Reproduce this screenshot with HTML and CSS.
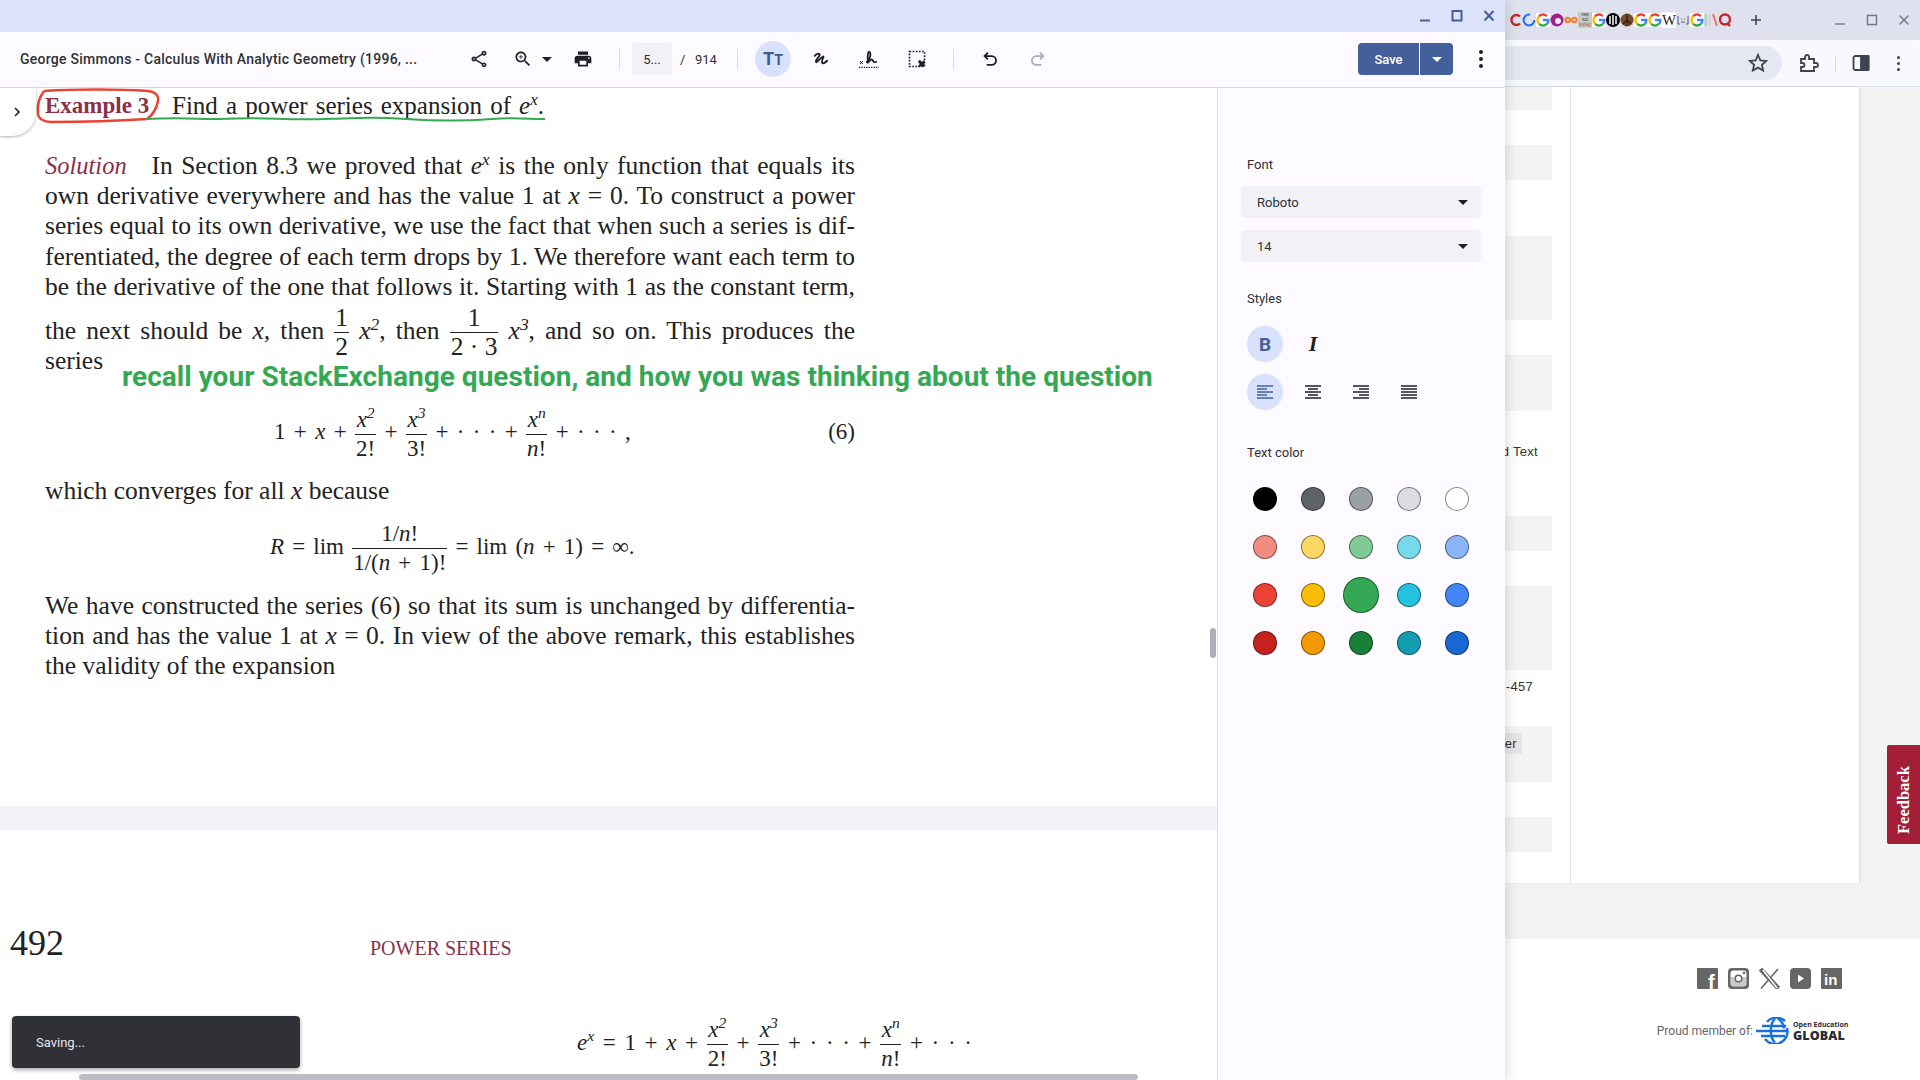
FILE: index.html
```html
<!DOCTYPE html>
<html lang="en">
<head>
    <meta charset="UTF-8">
    <title>George Simmons - Calculus With Analytic Geometry</title>
    <link rel="stylesheet" href="styles.css">
</head>
<body>
    <svg class="defs" width="0" height="0">
        <symbol id="fav-g" viewBox="1 0 14 16">
            <rect x="1" y="1" width="14" height="14" fill="#fff"/>
            <g fill="none" stroke-width="2.4">
                <path d="M8 8h5.4a5.5 5.5 0 0 1-1.5 3.9" stroke="#4285f4"/>
                <path d="M11.9 11.9a5.5 5.5 0 0 1-7.8 0" stroke="#34a853"/>
                <path d="M4.1 11.9a5.5 5.5 0 0 1 0-7.8" stroke="#fbbc05"/>
                <path d="M4.1 4.1a5.5 5.5 0 0 1 7.8 0" stroke="#ea4335"/>
            </g>
        </symbol>
        <symbol id="align-left" viewBox="0 0 16 14"><path d="M0 1h16M0 4h10M0 7h16M0 10h10M0 13h16"/></symbol>
        <symbol id="align-center" viewBox="0 0 16 14"><path d="M0 1h16M3 4h10M0 7h16M3 10h10M0 13h16"/></symbol>
        <symbol id="align-right" viewBox="0 0 16 14"><path d="M0 1h16M6 4h10M0 7h16M6 10h10M0 13h16"/></symbol>
        <symbol id="align-full" viewBox="0 0 16 14"><path d="M0 1h16M0 4h16M0 7h16M0 10h16M0 13h16"/></symbol>
    </svg>

    <!-- browser window behind the pdf app -->
    <div class="browser">
        <div class="tabstrip">
            <div class="favs">
                <svg class="fav" viewBox="0 0 14 16"><path d="M12 4.500a5 5 0 1 0 0 7" fill="none" stroke="#c62828" stroke-width="2.4"/></svg>
                <svg class="fav" viewBox="0 0 14 16"><circle cx="7" cy="8" r="5.4" fill="none" stroke="#1a73e8" stroke-width="2" stroke-dasharray="26 8"/></svg>
                <svg class="fav"><use href="#fav-g"/></svg>
                <svg class="fav" viewBox="0 0 14 16"><circle cx="7" cy="8" r="6.5" fill="#a01f8f"/><circle cx="8" cy="9" r="3" fill="#f4e9f4"/></svg>
                <svg class="fav" viewBox="0 0 14 16"><path d="M7 8C5 5 1.500 5 1.500 8s3.500 3 5.500 0 5.500-3 5.500 0-3.500 3-5.500 0z" fill="none" stroke="#f57c28" stroke-width="2"/></svg>
                <span class="fav fav-res">res<br>sci<br><b>today</b></span>
                <svg class="fav"><use href="#fav-g"/></svg>
                <svg class="fav" viewBox="0 0 14 16"><circle cx="7" cy="8" r="7" fill="#000"/><path d="M4 4v8M7 3v10M10 4v8" stroke="#fff" stroke-width="1.500"/></svg>
                <svg class="fav" viewBox="0 0 14 16"><circle cx="7" cy="8" r="6.5" fill="#7a4a28"/><path d="M7 2v12M7 8l-4 4M7 8l4 4" stroke="#222" stroke-width="1.200"/></svg>
                <svg class="fav"><use href="#fav-g"/></svg>
                <svg class="fav"><use href="#fav-g"/></svg>
                <span class="fav fav-w">W</span>
                <svg class="fav" viewBox="0 0 14 16"><path d="M2 4v8h2M12 4v8h-2M5 7h1M8 7h1M5 10h4" fill="none" stroke="#4a5a80"/></svg>
                <svg class="fav"><use href="#fav-g"/></svg>
                <svg class="fav" viewBox="0 0 14 16"><path d="M2 2v12" stroke="#a8d8c8" stroke-width="3"/><path d="M6 2v12" stroke="#e0c8c8" stroke-width="2"/><path d="M9 2l4 12" stroke="#e57368" stroke-width="2"/></svg>
                <svg class="fav" viewBox="0 0 14 16"><circle cx="7" cy="7.500" r="5" fill="none" stroke="#c62828" stroke-width="2.400"/><path d="M9 11l3 3" stroke="#c62828" stroke-width="2.400"/></svg>
            </div>
            <svg class="new-tab" viewBox="0 0 12 12"><path d="M6 1v10M1 6h10"/></svg>
            <div class="win-controls">
                <svg viewBox="0 0 12 12"><path d="M1 10h10"/></svg>
                <svg viewBox="0 0 12 12"><rect x="1.500" y="1.500" width="9" height="9"/></svg>
                <svg viewBox="0 0 12 12"><path d="M1.500 1.500l9 9M10.500 1.500l-9 9"/></svg>
            </div>
        </div>
        <div class="chrome-bar">
            <div class="omnibox">
                <svg class="chrome-icon" viewBox="0 0 24 24"><path d="M12 4l2.400 5.300 5.800.6-4.300 3.900 1.200 5.700L12 16.600l-5.100 2.900 1.200-5.700-4.300-3.900 5.800-.6z"/></svg>
            </div>
            <svg class="chrome-icon ext-icon" viewBox="0 0 24 24"><path d="M5 8h4V6a2 2 0 0 1 4 0v2h5v4h2a2 2 0 0 1 0 4h-2v4H5v-4h1.500a2 2 0 0 0 0-4H5z"/></svg>
            <span class="chrome-sep"></span>
            <svg class="chrome-icon panel-icon" viewBox="0 0 24 24"><rect x="4.500" y="5" width="15" height="14" rx="2"/><rect x="12" y="5" width="7.500" height="14" class="panel-fill"/></svg>
            <span class="chrome-kebab"><i></i><i></i><i></i></span>
        </div>
        <div class="site-main">
            <div class="site-sheet">
                <div class="form-col">
                    <div class="bar bar-a"></div>
                    <div class="bar bar-b"></div>
                    <div class="bar bar-c"></div>
                    <div class="bar bar-d"></div>
                    <div class="form-text text-a">d Text</div>
                    <div class="bar bar-e"></div>
                    <div class="bar bar-f"></div>
                    <div class="form-text text-b">-457</div>
                    <div class="bar bar-g"><span class="chip">er</span></div>
                    <div class="bar bar-h"></div>
                </div>
                <div class="preview-col"></div>
            </div>
            <div class="feedback">Feedback</div>
        </div>
        <footer class="site-footer">
            <div class="socials">
                <svg viewBox="0 0 21 21"><rect width="21" height="21" rx="1" fill="#666"/><text x="11" y="21" class="social-f">f</text></svg>
                <svg viewBox="0 0 21 21"><rect width="21" height="21" rx="4" fill="#666"/><rect x="2.500" y="2.500" width="16" height="16" rx="3" fill="#fff"/><rect x="2.500" y="9" width="16" height="9.500" fill="#666" opacity=".35"/><circle cx="10.500" cy="10.500" r="4" fill="#666"/><circle cx="10.500" cy="10.500" r="2.500" fill="#fff"/><circle cx="16" cy="5" r="1.300" fill="#666"/></svg>
                <svg viewBox="0 0 21 21"><path d="M1.500 1l18 19.500" stroke="#666" stroke-width="4.500" fill="none"/><path d="M19 1L2 20.500" stroke="#666" stroke-width="1.600" fill="none"/><path d="M3.800 2l14.400 18" stroke="#fff" stroke-width="1.500" fill="none"/></svg>
                <svg viewBox="0 0 21 21"><rect width="21" height="21" rx="4" fill="#666"/><path d="M8 6.500l6 4-6 4z" fill="#fff"/></svg>
                <svg viewBox="0 0 21 21"><rect width="21" height="21" rx="1" fill="#666"/><text x="3" y="17" class="social-in">in</text></svg>
            </div>
            <div class="member">
                <span class="member-label">Proud member of:</span>
                <svg class="oeg-globe" viewBox="0 0 34 27">
                    <g fill="none" stroke="#1a6fe0" stroke-width="2.400">
                        <path d="M11 5a12.500 12.500 0 0 1 18-1M31 11a12.500 12.500 0 0 1-22 11"/>
                        <path d="M19 1.500c-5 5-6 18 0 24M22 1.500c5 4 6 8 6 10"/>
                        <path d="M6 9h24M0 14h32M5 19h24"/>
                    </g>
                </svg>
                <div class="oeg-name"><span class="oeg-top">Open Education</span><span class="oeg-bottom">GLOBAL</span></div>
            </div>
        </footer>
    </div>

    <!-- pdf app window -->
    <div class="app">
        <div class="app-title">
            <svg viewBox="0 0 12 12"><path d="M1 10.500h10"/></svg>
            <svg viewBox="0 0 12 12"><rect x="1.500" y="1" width="9" height="9.500"/></svg>
            <svg viewBox="0 0 12 12"><path d="M1.500 1l9 9.500M10.500 1l-9 9.500"/></svg>
        </div>
        <div class="toolbar">
            <div class="doc-name">George Simmons - Calculus With Analytic Geometry (1996, ...</div>
            <button class="tb-btn"><svg viewBox="0 0 24 24"><path d="M18 16.080c-.76 0-1.440.3-1.960.77L8.910 12.700c.05-.23.09-.46.09-.7s-.04-.47-.09-.7l7.050-4.110c.54.5 1.250.81 2.040.81 1.660 0 3-1.340 3-3s-1.340-3-3-3-3 1.340-3 3c0 .24.04.47.09.7L8.040 9.810C7.500 9.310 6.790 9 6 9c-1.660 0-3 1.340-3 3s1.340 3 3 3c.79 0 1.500-.31 2.040-.81l7.120 4.160c-.05.21-.08.43-.08.65 0 1.610 1.310 2.920 2.920 2.920s2.920-1.310 2.920-2.920-1.310-2.920-2.920-2.920zM18 4c.55 0 1 .45 1 1s-.45 1-1 1-1-.45-1-1 .45-1 1-1zM6 13c-.55 0-1-.45-1-1s.45-1 1-1 1 .45 1 1-.45 1-1 1zm12 7.020c-.55 0-1-.45-1-1s.45-1 1-1 1 .45 1 1-.45 1-1 1z"/></svg></button>
            <button class="tb-btn zoom-btn"><svg viewBox="0 0 24 24"><path d="M15.500 14h-.79l-.28-.27C15.410 12.590 16 11.110 16 9.500 16 5.910 13.090 3 9.500 3S3 5.910 3 9.500 5.910 16 9.500 16c1.610 0 3.090-.59 4.230-1.570l.27.28v.79l5 4.990L20.490 19l-4.990-5zm-6 0C7.010 14 5 11.990 5 9.500S7.010 5 9.500 5 14 7.010 14 9.500 11.990 14 9.500 14zM12 10h-2v2H9v-2H7V9h2V7h1v2h2v1z"/></svg></button>
            <span class="caret zoom-caret"></span>
            <button class="tb-btn print-btn"><svg viewBox="0 0 24 24"><path d="M19 8H5c-1.660 0-3 1.340-3 3v6h4v4h12v-4h4v-6c0-1.660-1.340-3-3-3zm-3 11H8v-5h8v5zm3-7c-.55 0-1-.45-1-1s.45-1 1-1 1 .45 1 1-.45 1-1 1zm-1-9H6v4h12V3z"/></svg></button>
            <span class="tb-sep sep-page"></span>
            <div class="page-input">5...</div>
            <span class="page-slash">/</span>
            <span class="page-count">914</span>
            <span class="tb-sep sep-tools"></span>
            <button class="tb-btn text-tool"><span class="tt-big">T</span><span class="tt-small">T</span></button>
            <button class="tb-btn tool-btn"><svg viewBox="0 0 24 24" class="stroke-icon"><path d="M4 9c2-3 6.500-4.500 6.500-2S5 12 6 15.500c1 2 5-5 8.500-6.500 2-.5-3.500 6.500-.5 8 2 .5 4.500-2 6-3.500"/></svg></button>
            <button class="tb-btn tool-btn"><svg viewBox="0 0 24 24" class="stroke-icon sign-icon"><path class="sign-x" d="M1 14.500l3.500 3.500M4.500 14.500L1 18"/><path d="M8.500 16c3.500-1 6.500-9 4.500-12s-3.500 5-2 12c3-3 4.500-4.500 5.500-2.500s1.500 3 5 1.500"/><path class="sign-dots" d="M0 22h24"/></svg></button>
            <button class="tb-btn tool-btn"><svg viewBox="0 0 24 24"><rect x="3" y="3" width="18" height="18" fill="none" stroke="#1f2024" stroke-width="2" stroke-dasharray="2 1.750"/><path d="M21 21h-8.500l3-3-2.500-2.500 2.500-2.500 2.500 2.500 3-3z"/></svg></button>
            <span class="tb-sep sep-history"></span>
            <button class="tb-btn undo-btn"><svg viewBox="0 0 24 24" class="stroke-icon"><path d="M9.500 4.500L5.500 8.500l4 4M5.500 8.500h8.500a5.200 5.200 0 0 1 0 10.500H8"/></svg></button>
            <button class="tb-btn tool-btn redo-btn"><svg viewBox="0 0 24 24" class="stroke-icon"><path d="M14.500 4.500l4 4-4 4M18.500 8.500H10a5.200 5.200 0 0 0 0 10.500h6"/></svg></button>
            <div class="save-group">
                <span class="save-label">Save</span>
                <span class="save-arrow"><span class="caret caret-white"></span></span>
            </div>
            <div class="app-kebab"><i></i><i></i><i></i></div>
        </div>

        <div class="app-body">
            <div class="pdf-view">
                <div class="pdf-page page-one">
                    <div class="line example-line"><b class="example-tag">Example 3</b><span class="example-text">Find a power series expansion of <i>e</i><sup>x</sup>.</span></div>
                    <div class="line solution-line"><i class="solution-tag">Solution</i> In Section 8.3 we proved that <i>e</i><sup>x</sup> is the only function that equals its</div>
                    <div class="line">own derivative everywhere and has the value 1 at <i>x</i> = 0. To construct a power</div>
                    <div class="line">series equal to its own derivative, we use the fact that when such a series is dif-</div>
                    <div class="line">ferentiated, the degree of each term drops by 1. We therefore want each term to</div>
                    <div class="line">be the derivative of the one that follows it. Starting with 1 as the constant term,</div>
                    <div class="line next-line">the next should be <i>x,</i> then <span class="frac"><span>1</span><span class="den">2</span></span> <i>x</i><sup>2</sup>, then <span class="frac"><span>1</span><span class="den">2 · 3</span></span> <i>x</i><sup>3</sup>, and so on. This produces the</div>
                    <div class="line last-line">series</div>

                    <div class="display display-six">
                        <span class="math">1 + <i>x</i> + <span class="frac"><span><i>x</i><sup>2</sup></span><span class="den">2!</span></span> + <span class="frac"><span><i>x</i><sup>3</sup></span><span class="den">3!</span></span> + · · · + <span class="frac"><span><i>x</i><sup>n</sup></span><span class="den"><i>n</i>!</span></span> + · · · ,</span>
                        <span class="math">(6)</span>
                    </div>
                    <div class="line last-line which-line">which converges for all <i>x</i> because</div>
                    <div class="display display-r">
                        <span class="math"><i>R</i> = lim <span class="frac"><span>1/<i>n</i>!</span><span class="den">1/(<i>n</i> + 1)!</span></span> = lim (<i>n</i> + 1) = ∞.</span>
                    </div>
                    <div class="line we-line">We have constructed the series (6) so that its sum is unchanged by differentia-</div>
                    <div class="line">tion and has the value 1 at <i>x</i> = 0. In view of the above remark, this establishes</div>
                    <div class="line last-line">the validity of the expansion</div>

                    <svg class="marks" width="1218" height="718" viewBox="0 0 1218 718">
                        <path class="mark-red" d="M44 3c30-2 75-2 104 0 8 1 11 5 10 10-1 7-6 15-11 18-30 2-65 3-96 3-7 0-13-3-13-9-1-7 1-15 6-22"/>
                        <path class="mark-green" d="M146 31c40-2 60 1 90-.5s50 2 90 .5 50-2 80 0 60 2 86 0 40 .5 53 0"/>
                    </svg>
                    <div class="note">recall your StackExchange question, and how you was thinking about the question</div>
                </div>
                <div class="page-gap"></div>
                <div class="pdf-page page-two">
                    <div class="running-head"><span class="folio">492</span><span class="chapter">POWER SERIES</span></div>
                    <div class="display display-exp">
                        <span class="math"><i>e</i><sup>x</sup> = 1 + <i>x</i> + <span class="frac"><span><i>x</i><sup>2</sup></span><span class="den">2!</span></span> + <span class="frac"><span><i>x</i><sup>3</sup></span><span class="den">3!</span></span> + · · · + <span class="frac"><span><i>x</i><sup>n</sup></span><span class="den"><i>n</i>!</span></span> + · · ·</span>
                    </div>
                </div>
                <button class="panel-toggle"><svg viewBox="0 0 12 12"><path d="M4 2l4 4-4 4"/></svg></button>
                <div class="resize-grip"></div>
                <div class="scroll-thumb"></div>
                <div class="toast">Saving...</div>
            </div>

            <aside class="sidebar">
                <div class="side-label">Font</div>
                <div class="select">Roboto<span class="caret"></span></div>
                <div class="select select-size">14<span class="caret"></span></div>
                <div class="side-label label-styles">Styles</div>
                <div class="style-row row-first">
                    <span class="style-btn active style-b">B</span>
                    <span class="style-btn style-i">I</span>
                </div>
                <div class="style-row">
                    <span class="style-btn active"><svg><use href="#align-left"/></svg></span>
                    <span class="style-btn"><svg><use href="#align-center"/></svg></span>
                    <span class="style-btn"><svg><use href="#align-right"/></svg></span>
                    <span class="style-btn"><svg><use href="#align-full"/></svg></span>
                </div>
                <div class="side-label label-color">Text color</div>
                <div class="swatches">
                    <span class="swatch c-black"></span><span class="swatch c-grey1"></span><span class="swatch c-grey2"></span><span class="swatch c-grey3"></span><span class="swatch c-white"></span>
                    <span class="swatch c-red1"></span><span class="swatch c-yellow1"></span><span class="swatch c-green1"></span><span class="swatch c-cyan1"></span><span class="swatch c-blue1"></span>
                    <span class="swatch c-red2"></span><span class="swatch c-yellow2"></span><span class="swatch c-green2 selected"></span><span class="swatch c-cyan2"></span><span class="swatch c-blue2"></span>
                    <span class="swatch c-red3"></span><span class="swatch c-yellow3"></span><span class="swatch c-green3"></span><span class="swatch c-cyan3"></span><span class="swatch c-blue3"></span>
                </div>
            </aside>
        </div>
    </div>
</body>
</html>
```
FILE: styles.css
```css
* {
    margin: 0;
    padding: 0;
    box-sizing: border-box;
}
body {
    width: 1920px;
    height: 1080px;
    overflow: hidden;
    position: relative;
    font-family: Roboto, sans-serif;
    color: #303136;
    background-color: #fff;
}
button {
    border: none;
    background: none;
    font-family: inherit;
}
.defs {
    position: absolute;
}

/* browser behind */
.browser {
    height: 1080px;
    display: flex;
    flex-direction: column;
}
.tabstrip {
    height: 40px;
    flex: none;
    display: flex;
    align-items: center;
    justify-content: flex-end;
    background-color: #dfe1ee;
}
.favs {
    display: flex;
    margin-right: 18px;
}
.fav {
    display: block;
    width: 14px;
    height: 16px;
    overflow: hidden;
}
.fav-res {
    font-family: "Liberation Sans", sans-serif;
    font-size: 5px;
    line-height: 5px;
    color: #333;
    background-color: #c8c8c8;
    text-align: center;
}
.fav-res b {
    color: #c8502a;
    font-weight: 400;
}
.fav-w {
    font-family: "Liberation Serif", serif;
    font-size: 15px;
    line-height: 16px;
    background-color: #fff;
    color: #222;
    text-align: center;
}
.new-tab {
    width: 12px;
    height: 12px;
    margin-right: 72px;
    fill: none;
    stroke: #444750;
    stroke-width: 1.6;
}
.win-controls {
    display: flex;
    gap: 20px;
    margin-right: 10px;
}
.win-controls svg {
    width: 12px;
    height: 12px;
    fill: none;
    stroke: #73757e;
    stroke-width: 1.4;
}
.chrome-bar {
    height: 47px;
    flex: none;
    display: flex;
    align-items: center;
    background-color: #f8f8ff;
    border-radius: 8px 8px 0 0;
    border-bottom: 1px solid #dfe1ee;
}
.omnibox {
    width: 1782px;
    height: 34px;
    flex: none;
    display: flex;
    justify-content: flex-end;
    align-items: center;
    padding-right: 12px;
    background-color: #e5e7f2;
    border-radius: 0 17px 17px 0;
}
.chrome-icon {
    width: 24px;
    height: 24px;
    fill: none;
    stroke: #3f4250;
    stroke-width: 1.8;
}
.ext-icon {
    margin-left: 14px;
}
.chrome-sep {
    width: 1px;
    height: 16px;
    margin-left: 15px;
    background-color: #d5dcf5;
}
.panel-icon {
    margin-left: 13px;
}
.panel-fill {
    fill: #3f4250;
}
.chrome-kebab {
    display: flex;
    flex-direction: column;
    gap: 3px;
    margin-left: 24px;
}
.chrome-kebab i {
    display: block;
    width: 3px;
    height: 3px;
    border-radius: 50%;
    background-color: #3f4250;
}
.site-main {
    height: 852px;
    flex: none;
    position: relative;
    background-color: #f3f3f3;
}
.site-sheet {
    width: 1859px;
    height: 796px;
    display: flex;
    background-color: #fff;
    box-shadow: 1px 0 2px rgba(0,0,0,0.1);
}
.form-col {
    width: 1571px;
    flex: none;
    padding-right: 18px;
    border-right: 1px solid #dfe1ee;
    font-family: "Liberation Sans", sans-serif;
    font-size: 13px;
    letter-spacing: 0.3px;
    color: #333;
}
.bar {
    background-color: #f4f4f4;
}
.bar-a { height: 23px; }
.bar-b { height: 35px; margin-top: 35px; }
.bar-c { height: 84px; margin-top: 56px; }
.bar-d { height: 56px; margin-top: 35px; }
.bar-e { height: 35px; margin-top: 55px; }
.bar-f { height: 84px; margin-top: 35px; }
.bar-g { height: 56px; margin-top: 31px; padding-top: 7px; }
.bar-h { height: 35px; margin-top: 35px; }
.form-text {
    height: 17px;
    line-height: 16px;
    text-align: right;
}
.text-a { margin: 33px 14px 0 0; }
.text-b { margin: 9px 19px 0 0; height: 16px; }
.chip {
    display: block;
    width: 60px;
    height: 21px;
    margin: 0 30px 0 auto;
    padding-right: 5px;
    text-align: right;
    line-height: 21px;
    background-color: #e6e6e6;
}
.preview-col {
    flex: 1;
    background-color: #fff;
}
.feedback {
    position: absolute;
    right: 0;
    top: 658px;
    width: 33px;
    height: 99px;
    padding-bottom: 11px;
    display: flex;
    align-items: center;
    justify-content: center;
    writing-mode: vertical-rl;
    transform: rotate(180deg);
    background-color: #a31f37;
    border-radius: 0 2px 2px 0;
    font-family: "Liberation Serif", serif;
    font-weight: 700;
    font-size: 16.5px;
    color: #fff;
}
.site-footer {
    flex: 1;
    display: flex;
    flex-direction: column;
    align-items: flex-end;
    padding: 29px 74px 0 0;
    background-color: #fff;
}
.socials {
    display: flex;
    gap: 10px;
    margin-right: 4px;
}
.socials svg {
    display: block;
    width: 21px;
    height: 21px;
}
.social-f {
    font-family: "Liberation Sans", sans-serif;
    font-weight: 700;
    font-size: 20px;
    fill: #fff;
}
.social-in {
    font-family: "Liberation Sans", sans-serif;
    font-weight: 700;
    font-size: 15px;
    fill: #fff;
}
.member {
    display: flex;
    align-items: center;
    margin-top: 28px;
}
.member-label {
    font-size: 12px;
    color: #666;
}
.oeg-globe {
    width: 34px;
    height: 27px;
    margin-left: 3px;
}
.oeg-name {
    display: flex;
    flex-direction: column;
    width: 53px;
    margin-left: 3px;
    font-family: "Open Sans", sans-serif;
    font-weight: 700;
    color: #2a2c33;
    white-space: nowrap;
}
.oeg-top {
    font-size: 7px;
    line-height: 9px;
}
.oeg-bottom {
    font-size: 12.5px;
    line-height: 13px;
    font-weight: 800;
    letter-spacing: 0.1px;
}

/* pdf app window */
.app {
    position: absolute;
    left: 0;
    top: 0;
    width: 1505px;
    height: 1080px;
    display: flex;
    flex-direction: column;
    background-color: #fdfbff;
    box-shadow: 0 0 14px rgba(0,0,0,0.18);
}
.app-title {
    height: 32px;
    flex: none;
    display: flex;
    align-items: center;
    justify-content: flex-end;
    gap: 20px;
    padding-right: 10px;
    background-color: #dce3fa;
}
.app-title svg {
    width: 12px;
    height: 12px;
    fill: none;
    stroke: #44609a;
    stroke-width: 2;
}
.toolbar {
    height: 56px;
    flex: none;
    display: flex;
    align-items: center;
    padding: 0 0 1px 20px;
    border-bottom: 1px solid #d5d5da;
    background-color: #fdfbff;
}
.doc-name {
    width: 441px;
    flex: none;
    font-size: 14px;
    font-weight: 500;
    letter-spacing: 0.25px;
    white-space: nowrap;
}
.tb-btn {
    width: 36px;
    height: 36px;
    flex: none;
    display: flex;
    align-items: center;
    justify-content: center;
}
.tb-btn svg {
    width: 20px;
    height: 20px;
    fill: #1f2024;
}
.tb-btn .stroke-icon {
    fill: none;
    stroke: #1f2024;
    stroke-width: 2.2;
}
.zoom-btn {
    margin-left: 8px;
}
.caret {
    display: block;
    width: 0;
    height: 0;
    border-left: 5px solid transparent;
    border-right: 5px solid transparent;
    border-top: 5px solid #1f2024;
}
.zoom-caret {
    margin-left: 1px;
}
.print-btn {
    margin-left: 13px;
}
.tb-sep {
    width: 1px;
    height: 20px;
    flex: none;
    background-color: #dcdce0;
}
.sep-page {
    margin-left: 18px;
}
.page-input {
    width: 40px;
    height: 32px;
    flex: none;
    margin-left: 12px;
    display: flex;
    align-items: center;
    justify-content: center;
    font-size: 13px;
    background-color: #f1f1f6;
    border-radius: 4px;
}
.page-slash {
    margin-left: 8px;
    width: 6px;
    font-size: 13px;
}
.page-count {
    margin-left: 9px;
    width: 22px;
    font-size: 13px;
}
.sep-tools {
    margin-left: 20px;
}
.text-tool {
    margin-left: 17px;
    border-radius: 50%;
    background-color: #d8e2ff;
    color: #3f5b94;
    font-weight: 700;
    align-items: baseline;
    padding-top: 7px;
}
.tt-big {
    font-size: 18px;
}
.tt-small {
    font-size: 14px;
}
.tool-btn {
    margin-left: 12px;
}
.sign-icon {
    overflow: visible;
}
.tb-btn .sign-icon .sign-x {
    stroke-width: 1.2;
}
.tb-btn .sign-icon .sign-dots {
    stroke-width: 1.6;
    stroke-dasharray: 1.6 1.3;
}
.sep-history {
    margin-left: 18px;
}
.undo-btn {
    margin-left: 18px;
}
.tb-btn.redo-btn .stroke-icon {
    stroke: #adadb3;
}
.save-group {
    display: flex;
    height: 32px;
    margin-left: auto;
    background-color: #44609a;
    border-radius: 4px;
    color: #fff;
    font-size: 13px;
    font-weight: 500;
}
.save-label {
    width: 62px;
    display: flex;
    align-items: center;
    justify-content: center;
    border-right: 1px solid #fff;
}
.save-arrow {
    width: 33px;
    display: flex;
    align-items: center;
    justify-content: center;
}
.caret-white {
    border-top-color: #fff;
}
.app-kebab {
    width: 36px;
    margin: 0 6px 0 10px;
    display: flex;
    flex-direction: column;
    align-items: center;
    gap: 3px;
}
.app-kebab i {
    display: block;
    width: 4px;
    height: 4px;
    border-radius: 50%;
    background-color: #1f2024;
}
.app-body {
    flex: 1;
    display: flex;
    min-height: 0;
}

/* pdf content */
.pdf-view {
    width: 1217px;
    flex: none;
    position: relative;
    overflow: hidden;
    background-color: #fff;
    font-family: "Liberation Serif", serif;
    font-size: 25.5px;
    color: #222;
}
.pdf-page {
    position: relative;
}
.page-one {
    height: 718px;
    padding: 3px 0 0 45px;
}
.line {
    width: 810px;
    height: 30.3px;
    line-height: 30.3px;
    text-align: justify;
    text-align-last: justify;
}
.last-line {
    text-align-last: left;
}
.example-line {
    display: flex;
    text-align-last: left;
    font-size: 25px;
}
.example-tag {
    width: 127px;
    flex: none;
    color: #8a3048;
    font-size: 23px;
}
.example-text {
    width: 372px;
    text-align-last: justify;
}
.solution-line {
    margin-top: 29.5px;
}
.solution-tag {
    display: inline-block;
    width: 98px;
    text-align-last: left;
    color: #8a3048;
    font-size: 24.5px;
}
sup {
    font-size: 0.68em;
    line-height: 0;
    font-style: italic;
}
.next-line {
    margin-top: 13.5px;
}
.frac {
    display: inline-flex;
    flex-direction: column;
    vertical-align: middle;
    text-align: center;
    text-align-last: center;
    line-height: 28px;
    margin: -14px 0;
}
.den {
    border-top: 1px solid #222;
    padding: 0 1px;
    white-space: nowrap;
}
.display {
    display: flex;
    justify-content: space-between;
    width: 810px;
    height: 30px;
    line-height: 30px;
    white-space: nowrap;
}
.math {
    font-size: 23px;
}
.display-six {
    margin-top: 41px;
    padding-left: 229px;
    word-spacing: 2.6px;
}
.which-line {
    margin-top: 29px;
}
.display-r {
    margin-top: 25px;
    padding-left: 225px;
    word-spacing: 2.4px;
}
.we-line {
    margin-top: 29px;
}
.marks {
    position: absolute;
    left: 0;
    top: 0;
    fill: none;
    pointer-events: none;
}
.mark-red {
    stroke: #ea4335;
    stroke-width: 2.5;
}
.mark-green {
    stroke: #34a853;
    stroke-width: 2;
}
.note {
    position: absolute;
    left: 122px;
    top: 272px;
    font-family: Roboto, sans-serif;
    font-weight: 700;
    font-size: 28px;
    letter-spacing: 0.03px;
    line-height: 34px;
    white-space: nowrap;
    color: #34a853;
}
.page-gap {
    height: 24px;
    background-color: #f1f1f6;
}
.page-two {
    padding-top: 93px;
}
.running-head {
    display: flex;
    align-items: baseline;
    height: 40px;
    padding-left: 10px;
}
.folio {
    width: 360px;
    font-size: 36px;
    line-height: 40px;
}
.chapter {
    font-size: 20px;
    color: #8a3048;
}
.display-exp {
    margin-top: 65px;
    padding-left: 577px;
    width: auto;
    word-spacing: 2.9px;
}
.panel-toggle {
    position: absolute;
    left: 0;
    top: 0;
    width: 36px;
    height: 48px;
    display: flex;
    align-items: center;
    justify-content: center;
    padding-right: 2px;
    background-color: #fff;
    border-radius: 0 0 24px 0;
    box-shadow: 0 1px 3px rgba(0,0,0,0.3);
}
.panel-toggle svg {
    width: 12px;
    height: 12px;
    fill: none;
    stroke: #1f2024;
    stroke-width: 1.6;
}
.resize-grip {
    position: absolute;
    left: 1210px;
    top: 540px;
    width: 6px;
    height: 30px;
    border-radius: 3px;
    background-color: #aeaeb4;
}
.scroll-thumb {
    position: absolute;
    left: 79px;
    bottom: 0;
    width: 1059px;
    height: 6px;
    border-radius: 3px;
    background-color: #bcbcc4;
}
.toast {
    position: absolute;
    left: 12px;
    top: 928px;
    width: 288px;
    height: 52px;
    padding-left: 24px;
    display: flex;
    align-items: center;
    font-family: Roboto, sans-serif;
    font-size: 13px;
    color: #e8e8ee;
    background-color: #303136;
    border-radius: 4px;
    box-shadow: 0 2px 4px rgba(0,0,0,0.35);
}

/* properties panel */
.sidebar {
    flex: 1;
    padding: 67px 0 0 23px;
    border-left: 1px solid #dcdce0;
    background-color: #fdfbff;
}
.side-label {
    height: 20px;
    line-height: 20px;
    margin-left: 6px;
    font-size: 13px;
}
.select {
    width: 240px;
    height: 32px;
    margin-top: 11px;
    padding: 0 13px 0 16px;
    display: flex;
    align-items: center;
    justify-content: space-between;
    font-size: 13px;
    background-color: #f1f1f6;
    border-radius: 4px;
}
.select-size {
    margin-top: 12px;
}
.label-styles {
    margin-top: 27px;
}
.style-row {
    display: flex;
    gap: 12px;
    margin: 12px 0 0 6px;
}
.row-first {
    margin-top: 17px;
}
.style-btn {
    width: 36px;
    height: 36px;
    display: flex;
    align-items: center;
    justify-content: center;
    border-radius: 50%;
    color: #1f2024;
}
.style-btn.active {
    background-color: #d8e2ff;
    color: #44609a;
}
.style-b {
    font-size: 19px;
    font-weight: 700;
}
.style-i {
    font-family: "Liberation Serif", serif;
    font-size: 22px;
    font-weight: 700;
    font-style: italic;
}
.style-btn svg {
    width: 16px;
    height: 14px;
    fill: none;
    stroke: currentColor;
    stroke-width: 1.500;
}
.label-color {
    margin-top: 33px;
}
.swatches {
    display: grid;
    grid-template-columns: repeat(5, 48px);
    grid-auto-rows: 48px;
    margin-top: 12px;
    justify-items: center;
    align-items: center;
}
.swatch {
    width: 24px;
    height: 24px;
    border-radius: 50%;
    border: 1px solid rgba(0,0,0,0.45);
}
.swatch.selected {
    width: 36px;
    height: 36px;
}
.c-black { background-color: #000; }
.c-grey1 { background-color: #5f6368; }
.c-grey2 { background-color: #9aa0a6; }
.c-grey3 { background-color: #dadce0; }
.c-white { background-color: #fff; }
.c-red1 { background-color: #f28b82; }
.c-yellow1 { background-color: #fdd663; }
.c-green1 { background-color: #81c995; }
.c-cyan1 { background-color: #78d9ec; }
.c-blue1 { background-color: #8ab4f8; }
.c-red2 { background-color: #ea4335; }
.c-yellow2 { background-color: #fbbc04; }
.c-green2 { background-color: #34a853; }
.c-cyan2 { background-color: #24c1e0; }
.c-blue2 { background-color: #4285f4; }
.c-red3 { background-color: #c5221f; }
.c-yellow3 { background-color: #f29900; }
.c-green3 { background-color: #188038; }
.c-cyan3 { background-color: #129eaf; }
.c-blue3 { background-color: #1967d2; }
```
